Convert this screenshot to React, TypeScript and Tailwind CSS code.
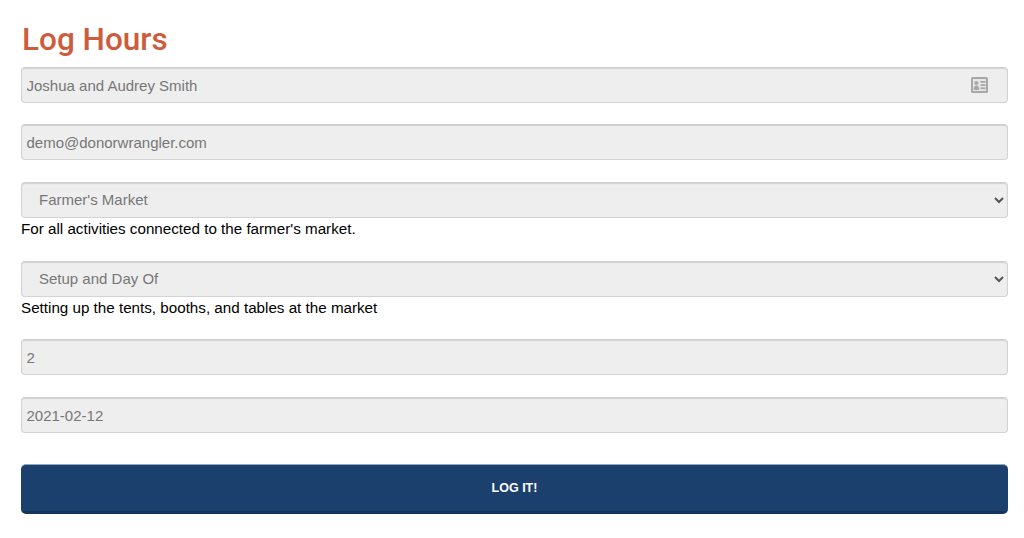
import React from "react";

const box =
  "block w-full h-[36px] rounded-[4px] border border-[#d3d3d3] border-t-[#cfcfcf] bg-[#eeeeee] shadow-[inset_0_1px_1px_rgba(0,0,0,0.12)] text-[15px] text-[#777777] outline-none";

function Field({ value, icon }: { value: string; icon?: boolean }) {
  return (
    <div className="relative">
      <input readOnly value={value} className={`${box} px-[4.5px]`} />
      {icon && (
        <svg
          className="absolute right-[20px] top-[10px]"
          width="17"
          height="16"
          viewBox="0 0 17 16"
        >
          <rect x="0" y="0" width="17" height="16" rx="1.5" fill="#a8a8a8" />
          <rect x="2" y="2" width="13" height="12" fill="#e6e6e6" />
          <circle cx="5.4" cy="6" r="2.1" fill="#a8a8a8" />
          <path d="M2.6 13c0-3 1.1-4.4 2.8-4.4S8.2 10 8.2 13z" fill="#a8a8a8" />
          <rect x="9.5" y="4" width="5" height="1.8" fill="#a8a8a8" />
          <rect x="9.5" y="7.2" width="5" height="1.8" fill="#a8a8a8" />
          <rect x="9.5" y="10.4" width="5" height="1.8" fill="#a8a8a8" />
        </svg>
      )}
    </div>
  );
}

function Select({ value, help }: { value: string; help: string }) {
  return (
    <div>
      <div className="relative">
        <select
          disabled
          defaultValue={value}
          className={`${box} appearance-none pl-[17px] pr-[24px] opacity-100`}
        >
          <option>{value}</option>
        </select>
        <svg
          className="absolute right-[4px] top-[15px]"
          width="10"
          height="7"
          viewBox="0 0 10 7"
          fill="none"
          stroke="#555555"
          strokeWidth="2"
        >
          <path d="M1 1l4 4 4-4" />
        </svg>
      </div>
      <p className="mt-[1px] text-[15.2px] leading-[20px] text-black">{help}</p>
    </div>
  );
}

export default function App() {
  return (
    <div className="min-h-[538px] bg-white px-[21px] pr-[16px] pt-[19px] font-['Liberation_Sans',Arial,sans-serif]">
      <h1 className="h-[48px] pl-[1px] font-['Roboto',sans-serif] text-[31.5px] leading-[42px] font-medium text-[#cd5c3c]">
        Log Hours
      </h1>
      <div className="flex flex-col">
        <div className="mb-[21px]">
          <Field value="Joshua and Audrey Smith" icon />
        </div>
        <div className="mb-[22px]">
          <Field value="demo@donorwrangler.com" />
        </div>
        <div className="mb-[22px]">
          <Select
            value="Farmer's Market"
            help="For all activities connected to the farmer's market."
          />
        </div>
        <div className="mb-[21px]">
          <Select
            value="Setup and Day Of"
            help="Setting up the tents, booths, and tables at the market"
          />
        </div>
        <div className="mb-[22px]">
          <Field value="2" />
        </div>
        <div className="mb-[31px]">
          <Field value="2021-02-12" />
        </div>
        <button className="h-[50px] w-full rounded-[5px] border-t border-t-[#8fa8c4] border-b-[3px] border-b-[#143459] bg-[#1b406d] text-[12.5px] font-bold text-white">
          LOG IT!
        </button>
      </div>
    </div>
  );
}
